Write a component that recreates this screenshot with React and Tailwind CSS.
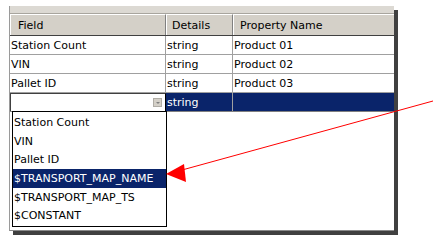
import React from "react";

const rows = [
  { field: "Station Count", details: "string", prop: "Product 01" },
  { field: "VIN", details: "string", prop: "Product 02" },
  { field: "Pallet ID", details: "string", prop: "Product 03" },
];

const options = [
  "Station Count",
  "VIN",
  "Pallet ID",
  "$TRANSPORT_MAP_NAME",
  "$TRANSPORT_MAP_TS",
  "$CONSTANT",
];

export default function App() {
  return (
    <div className="relative w-[446px] h-[246px] bg-white font-['DejaVu_Sans',Verdana,sans-serif] text-[11px] text-black leading-none">
      <div className="pt-[6px] pl-[9px]">
        <div className="relative w-[385px] h-[225px] bg-white shadow-[4px_4px_0_#404040] border-l border-[#9a9a9a] border-b border-b-[#8a8a8a] flex flex-col">
          {/* band of the panel above */}
          <div className="h-[7px] bg-[#dcd9d3] border-b border-[#a8a59e] box-content" />

          {/* header */}
          <div className="flex h-[21px] bg-[#d4d0c8] border-b border-[#404040] box-content">
            <div className="w-[156px] flex items-center pl-[7px] border-l border-t border-white border-r border-r-[#808080]">
              Field
            </div>
            <div className="w-[67px] flex items-center pl-[5px] border-l border-t border-white border-r border-r-[#808080]">
              Details
            </div>
            <div className="flex-1 flex items-center pl-[6px] border-l border-t border-white">
              Property Name
            </div>
          </div>

          {/* rows */}
          {rows.map((r) => (
            <div key={r.field} className="flex h-[19px] border-b border-[#a0a0a0]">
              <div className="w-[156px] flex items-center pl-[1px] border-r border-[#a0a0a0]">{r.field}</div>
              <div className="w-[67px] flex items-center pl-[1px] border-r border-[#a0a0a0]">{r.details}</div>
              <div className="flex-1 flex items-center pl-[1px]">{r.prop}</div>
            </div>
          ))}

          {/* edited row */}
          <div className="flex h-[19px] border-b border-[#808080]">
            <div className="w-[156px] flex items-center bg-white border-t border-l border-[#404040] border-r border-r-black">
              <div className="flex-1" />
              <div className="w-[9px] h-[9px] mr-[3px] bg-[#d4d0c8] border border-[#b0ada6] flex items-center justify-center">
                <div className="w-0 h-0 border-l-[2px] border-r-[2px] border-t-[2px] border-l-transparent border-r-transparent border-t-[#808080]" />
              </div>
            </div>
            <div className="w-[67px] flex items-center pl-[1px] bg-[#0a246a] text-white border-r border-[#a0a0a0]">string</div>
            <div className="flex-1 bg-[#0a246a]" />
          </div>

          {/* dropdown list */}
          <div className="absolute left-[2px] top-[105px] w-[155px] border border-black bg-white py-[1px]">
            {options.map((o, i) => (
              <div
                key={o}
                className={
                  "h-[18.7px] flex items-center pl-[1px] " +
                  (i === 3 ? "bg-[#0a246a] text-white" : "")
                }
              >
                {o}
              </div>
            ))}
          </div>
        </div>
      </div>

      {/* red annotation arrow */}
      <svg className="absolute left-0 top-0" width="446" height="246" viewBox="0 0 446 246">
        <line x1="433" y1="101" x2="182" y2="170" stroke="#ff0000" strokeWidth="1" />
        <polygon points="166,174 184,164 186,182" fill="#ff0000" />
      </svg>
    </div>
  );
}
